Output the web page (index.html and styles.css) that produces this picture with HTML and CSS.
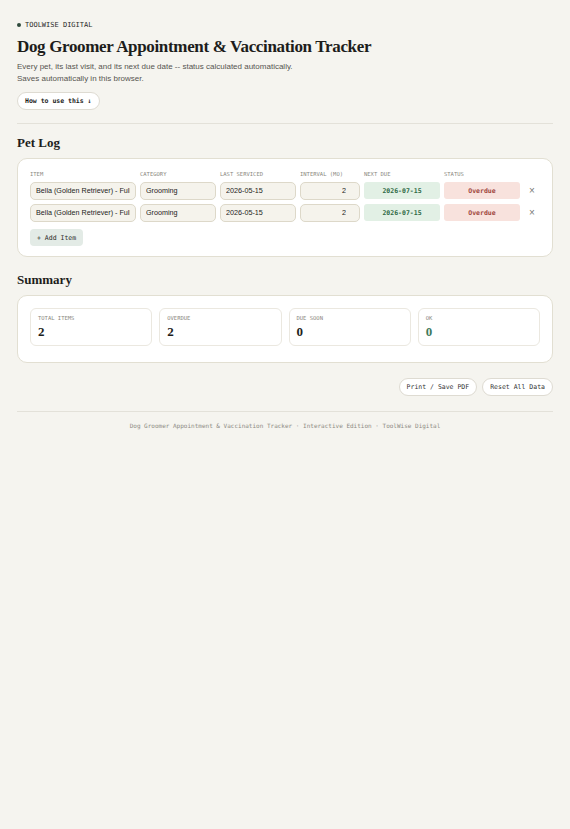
FILE: index.html
```html
<!DOCTYPE html>
<html lang="en">
<head>
<meta charset="utf-8">
<title>Dog Groomer Appointment &amp; Vaccination Tracker</title>
<link rel="stylesheet" href="styles.css">
</head>
<body>
<main class="page">
  <header class="hero">
    <div class="eyebrow"><span class="dot"></span>TOOLWISE DIGITAL</div>
    <h1 class="title">Dog Groomer Appointment &amp; Vaccination Tracker</h1>
    <p class="lead">Every pet, its last visit, and its next due date -- status calculated automatically.<br>Saves automatically in this browser.</p>
    <button class="pill pill-bold">How to use this ↓</button>
  </header>

  <section class="section first">
    <h2 class="heading">Pet Log</h2>
    <div class="card log">
      <div class="grid head">
        <span>ITEM</span><span>CATEGORY</span><span>LAST SERVICED</span><span>INTERVAL (MO)</span><span>NEXT DUE</span><span>STATUS</span><span></span>
      </div>
      <div class="grid row">
        <input class="field" value="Bella (Golden Retriever) - Full Groom">
        <input class="field" value="Grooming">
        <input class="field" value="2026-05-15">
        <input class="field num" value="2">
        <span class="tag due">2026-07-15</span>
        <span class="tag over">Overdue</span>
        <span class="remove">×</span>
      </div>
      <div class="grid row">
        <input class="field" value="Bella (Golden Retriever) - Full Groom">
        <input class="field" value="Grooming">
        <input class="field" value="2026-05-15">
        <input class="field num" value="2">
        <span class="tag due">2026-07-15</span>
        <span class="tag over">Overdue</span>
        <span class="remove">×</span>
      </div>
      <button class="add">+ Add Item</button>
    </div>
  </section>

  <section class="section">
    <h2 class="heading">Summary</h2>
    <div class="card stats">
      <div class="stat"><div class="stat-label">TOTAL ITEMS</div><div class="stat-value">2</div></div>
      <div class="stat"><div class="stat-label">OVERDUE</div><div class="stat-value">2</div></div>
      <div class="stat"><div class="stat-label">DUE SOON</div><div class="stat-value">0</div></div>
      <div class="stat"><div class="stat-label">OK</div><div class="stat-value ok">0</div></div>
    </div>
  </section>

  <div class="actions">
    <button class="pill">Print / Save PDF</button>
    <button class="pill">Reset All Data</button>
  </div>

  <footer class="footer">Dog Groomer Appointment &amp; Vaccination Tracker · Interactive Edition · ToolWise Digital</footer>
</main>
</body>
</html>
```

FILE: styles.css
```css
* { box-sizing: border-box; }
html, body { margin: 0; padding: 0; }
body {
  background: #f5f4ef;
  color: #1d1d1b;
  font-family: "Liberation Sans", Arial, sans-serif;
}
.page {
  padding: 20px 17px 40px;
}
.eyebrow {
  display: flex;
  align-items: center;
  gap: 4px;
  font-family: "DejaVu Sans Mono", monospace;
  font-size: 7px;
  color: #2a2a28;
  line-height: 10px;
}
.dot {
  width: 4px;
  height: 4px;
  border-radius: 50%;
  background: #2f4a3c;
}
.title {
  font-family: "Liberation Serif", "Times New Roman", serif;
  font-weight: 700;
  font-size: 17px;
  line-height: 22px;
  margin: 6px 0 3px;
  letter-spacing: -0.02em;
}
.lead {
  margin: 0 0 4px;
  font-size: 8px;
  line-height: 12px;
  color: #555450;
}
.pill {
  font-family: "DejaVu Sans Mono", monospace;
  font-size: 6.5px;
  height: 18px;
  padding: 0 7px;
  border: 1px solid #dedbd2;
  border-radius: 9px;
  background: #fff;
  color: #333;
}
.pill-bold { font-weight: 700; color: #1d1d1b; height: 18px; }
.hero {
  padding-bottom: 13px;
  border-bottom: 1px solid #e3e1d9;
}
.section { margin-top: 15px; }
.section.first { margin-top: 11px; }
.heading {
  font-family: "Liberation Serif", "Times New Roman", serif;
  font-weight: 700;
  font-size: 13px;
  line-height: 16px;
  margin: 0 0 7px;
}
.card {
  background: #fff;
  border: 1.5px solid #e2dfd2;
  border-radius: 10px;
}
.log { padding: 11px 12px 10px; }
.grid {
  display: grid;
  grid-template-columns: 106px 76px 76px 60px 76px 76px 1fr;
  column-gap: 4px;
  align-items: center;
}
.head span {
  font-family: "DejaVu Sans Mono", monospace;
  font-size: 5.5px;
  color: #8a8880;
  line-height: 9px;
}
.head { margin-bottom: 2.5px; }
.row { margin-bottom: 4px; }
.field {
  width: 100%;
  height: 18px;
  min-width: 0;
  border: 1px solid #ddd8c9;
  border-radius: 5px;
  background: #f5f3ec;
  font-family: "Liberation Sans", Arial, sans-serif;
  font-size: 7.2px;
  color: #1d1d1b;
  padding: 0 5px;
}
.num { text-align: right; padding-right: 13px; }
.tag {
  height: 17px;
  border-radius: 3px;
  display: flex;
  align-items: center;
  justify-content: center;
  font-family: "DejaVu Sans Mono", monospace;
  font-size: 6.5px;
  font-weight: 700;
}
.due { background: #e2f0e5; color: #2f6a46; }
.over { background: #f8e2dd; color: #a0473d; }
.remove {
  text-align: center;
  color: #7a7a78;
  font-size: 10px;
  line-height: 1;
}
.add {
  margin-top: 2px;
  height: 17px;
  padding: 0 7px;
  border: none;
  border-radius: 4px;
  background: #e3ebe6;
  font-family: "DejaVu Sans Mono", monospace;
  font-size: 6.5px;
  color: #2a2a28;
}
.stats {
  display: grid;
  grid-template-columns: repeat(4, 1fr);
  gap: 7px;
  padding: 12px 12px 16px;
}
.stat {
  border: 1px solid #ebe8e0;
  border-radius: 6px;
  padding: 5px 7px 6px;
  height: 38px;
}
.stat-label {
  font-family: "DejaVu Sans Mono", monospace;
  font-size: 5.5px;
  color: #8a8880;
  line-height: 8px;
}
.stat-value {
  font-family: "Liberation Serif", "Times New Roman", serif;
  font-weight: 700;
  font-size: 13px;
  line-height: 16px;
  margin-top: 2px;
  color: #1d1d1b;
}
.stat-value.ok { color: #3f7a5b; }
.actions {
  display: flex;
  justify-content: flex-end;
  gap: 5px;
  margin-top: 15px;
  padding-bottom: 15px;
  border-bottom: 1px solid #e3e1d9;
}
.footer {
  text-align: center;
  font-family: "DejaVu Sans Mono", monospace;
  font-size: 6px;
  color: #8d8b84;
  margin-top: 10px;
}
```
